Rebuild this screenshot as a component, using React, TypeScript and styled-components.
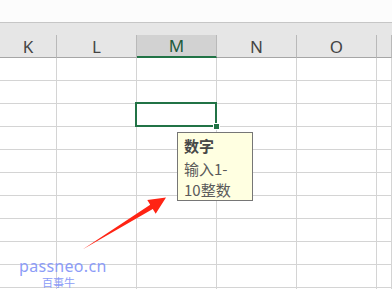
import React from 'react';
import styled, {createGlobalStyle} from 'styled-components';

const GlobalStyle = createGlobalStyle`
  html, body {
    margin: 0;
    padding: 0;
    background: #ffffff;
    overflow: hidden;
  }
`

const Sheet = styled.div`
  position: relative;
  width: 392px;
  height: 289px;
  overflow: hidden;
  background: #ffffff;
  font-family: "Noto Sans", "Noto Sans CJK SC", sans-serif;
`
const TopStrip = styled.div`
  height: 22px;
  background: #fcfcfc;
  border-bottom: 1px solid #c6c6c6;
`
const HeaderBand = styled.div`
  display: grid;
  grid-template-columns: 57px 80px 80px 80px 80px 1fr;
  padding-top: 12px;
  background: #e6e6e6;
`
const HeaderCell = styled.div<{$active?: boolean}>`
  box-sizing: border-box;
  height: 23px;
  display: flex;
  align-items: center;
  justify-content: center;
  padding-top: 1px;
  border-right: 1px solid #b9b9b9;
  border-bottom: ${p => p.$active ? '2px solid #217346' : '1px solid #a6a6a6'};
  background: ${p => p.$active ? '#d2d2d2' : '#e6e6e6'};
  color: ${p => p.$active ? '#1f5b3c' : '#444444'};
  font-size: 17px;
  line-height: 20px;
`
const Grid = styled.div`
  display: grid;
  grid-template-columns: 57px 80px 80px 80px 80px 1fr;
  grid-auto-rows: 23px;
`
const Cell = styled.div<{$selected?: boolean}>`
  box-sizing: border-box;
  position: ${p => p.$selected ? 'relative' : 'static'};
  border-right: 1px solid #d4d4d4;
  border-bottom: 1px solid #d4d4d4;

  ${p => p.$selected && `
    &::before {
      content: '';
      position: absolute;
      top: -2px;
      left: -2px;
      right: -1px;
      bottom: -1px;
      border: 2px solid #217346;
    }
    &::after {
      content: '';
      position: absolute;
      left: 77px;
      top: 20px;
      width: 5px;
      height: 5px;
      background: #217346;
      outline: 1px solid #ffffff;
    }
  `}
`
const Tip = styled.div`
  position: absolute;
  z-index: 5;
  left: 40px;
  top: 28px;
  width: 76px;
  box-sizing: border-box;
  padding: 3px 6px 0 6px;
  background: #ffffe1;
  border: 1px solid #767676;
  font-family: "Noto Sans CJK SC", "Noto Sans", sans-serif;
  font-size: 15px;
`
const TipTitle = styled.div`
  font-weight: 700;
  color: #474747;
  line-height: 19px;
  margin-bottom: 3px;
`
const TipLine = styled.div`
  color: #5a5a5a;
  line-height: 21px;
  white-space: nowrap;
`
const Arrow = styled.svg`
  position: absolute;
  left: 0;
  top: 0;
  pointer-events: none;
`
const Watermark = styled.div`
  position: absolute;
  left: 19px;
  top: 258px;
  color: #8c9cf7;
  pointer-events: none;
`
const MarkSite = styled.div`
  font-size: 16px;
  line-height: 17px;
  letter-spacing: 0.3px;
`
const MarkName = styled.div`
  margin-left: 23px;
  margin-top: 2px;
  font-family: "Noto Sans CJK SC", sans-serif;
  font-size: 11px;
  line-height: 11px;
`

const columns = ['K', 'L', 'M', 'N', 'O', '']
const rowCount = 11

function App() {
    return (
        <Sheet>
            <GlobalStyle/>
            <TopStrip/>
            <HeaderBand>
                {columns.map((c, i) =>
                    <HeaderCell key={i} $active={c === 'M'}>{c}</HeaderCell>
                )}
            </HeaderBand>
            <Grid>
                {Array.from({length: rowCount}).map((_, r) =>
                    columns.map((c, i) => {
                        const selected = r === 2 && c === 'M'
                        return (
                            <Cell key={r + '-' + i} $selected={selected}>
                                {selected &&
                                    <Tip>
                                        <TipTitle>数字</TipTitle>
                                        <TipLine>输入1-</TipLine>
                                        <TipLine>10整数</TipLine>
                                    </Tip>
                                }
                            </Cell>
                        )
                    })
                )}
            </Grid>
            <Arrow width="392" height="289" viewBox="0 0 392 289">
                <polygon
                    points="82.5,249.5 150.2,204.8 147.3,200.1 166,197.5 155.7,213.7 152.8,209"
                    fill="#ff2414"
                />
            </Arrow>
            <Watermark>
                <MarkSite>passneo.cn</MarkSite>
                <MarkName>百事牛</MarkName>
            </Watermark>
        </Sheet>
    )
}

export default App
